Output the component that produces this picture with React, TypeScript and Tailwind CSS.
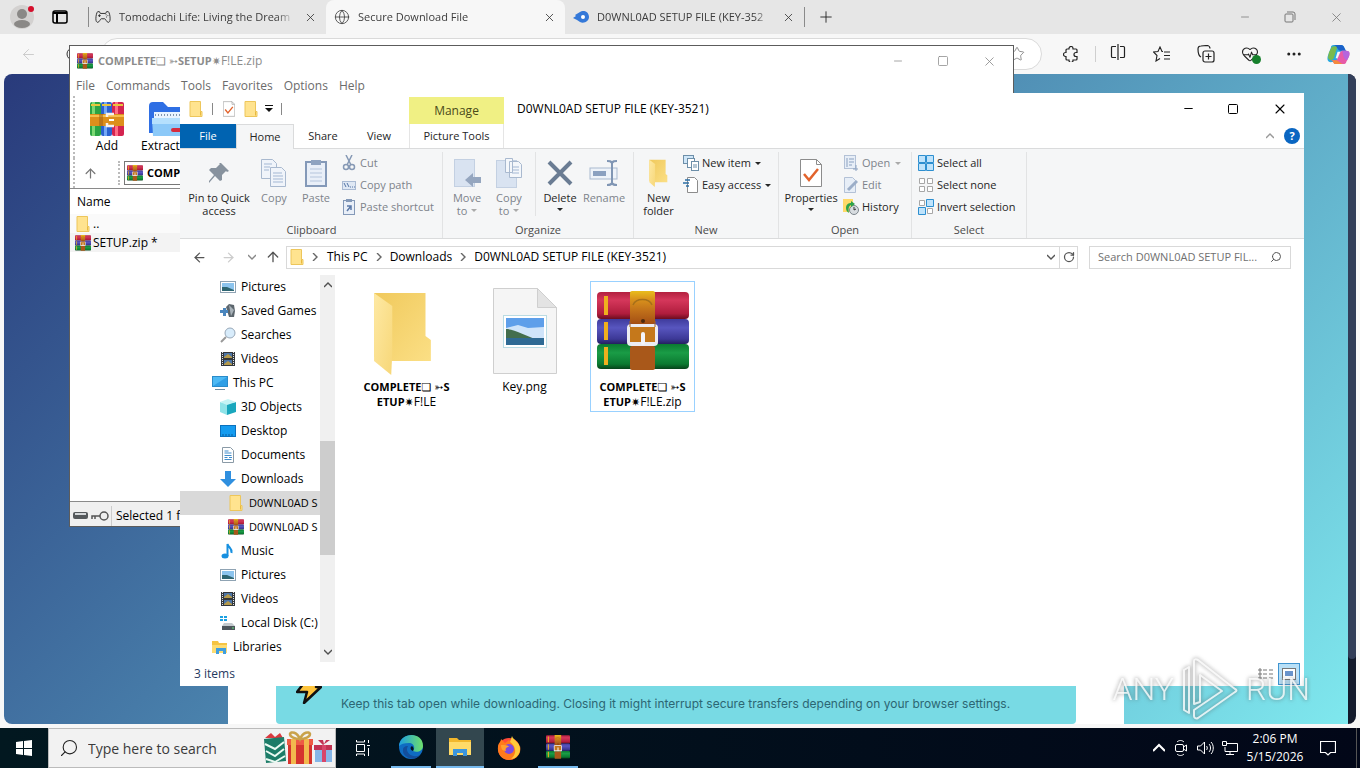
import type { ReactNode } from "react";
import {
  ArrowLeft,
  ArrowRight,
  ArrowUp,
  Ellipsis,
  Globe,
  HeartPulse,
  Minus,
  Plus,
  RotateCw,
  Search,
  Square,
  Star,
  X,
} from "lucide-react";

type IconProps = { className?: string };

type NavItem = {
  label: string;
  icon: (props: IconProps) => ReactNode;
  level: 1 | 2 | 3;
  active?: boolean;
};

/* ---------- icons ---------- */

function BooksIcon({ className }: IconProps) {
  return (
    <svg viewBox="0 0 92 80" preserveAspectRatio="none" className={className}>
      <defs>
        <linearGradient id="bookRed" x2="0" y2="1">
          <stop offset="0" stopColor="#b3203f" />
          <stop offset=".3" stopColor="#d5375b" />
          <stop offset=".8" stopColor="#b01d3d" />
          <stop offset="1" stopColor="#6b0d1f" />
        </linearGradient>
        <linearGradient id="bookBlue" x2="0" y2="1">
          <stop offset="0" stopColor="#3f3b9c" />
          <stop offset=".35" stopColor="#5856bf" />
          <stop offset=".8" stopColor="#3c3896" />
          <stop offset="1" stopColor="#24205f" />
        </linearGradient>
        <linearGradient id="bookGreen" x2="0" y2="1">
          <stop offset="0" stopColor="#0b7a31" />
          <stop offset=".35" stopColor="#1a9c46" />
          <stop offset=".8" stopColor="#0b7a31" />
          <stop offset="1" stopColor="#06431a" />
        </linearGradient>
        <linearGradient id="belt" x2="0" y2="1">
          <stop offset="0" stopColor="#e9bd1c" />
          <stop offset=".25" stopColor="#d9921c" />
          <stop offset=".6" stopColor="#c0701a" />
          <stop offset="1" stopColor="#a34e14" />
        </linearGradient>
      </defs>
      <rect y="1" width="92" height="27" rx="4" fill="url(#bookRed)" />
      <rect y="28" width="92" height="25" rx="4" fill="url(#bookBlue)" />
      <rect y="53" width="92" height="25" rx="4" fill="url(#bookGreen)" />
      <path d="M9 5v19M9 31v18M9 56v18" stroke="#efb01e" strokeWidth="4" />
      <rect x="30" y="33" width="31" height="22" rx="4" fill="#ececf2" />
      <rect x="33" y="0" width="25" height="33" rx="2" fill="url(#belt)" />
      <rect x="33" y="36" width="25" height="15" fill="#c5781b" />
      <rect x="33" y="55" width="25" height="24" rx="2" fill="#a9581a" />
      <path d="M36 14a10 8 0 0 1 19 0" fill="none" stroke="#a6701a" strokeWidth="1.5" />
      <path d="M33 30v6M58 30v6" stroke="#a8651c" />
      <path d="M46 43v9" stroke="#f4f4f8" strokeWidth="4" strokeLinecap="round" />
      <circle cx="46" cy="30" r="2" fill="#4e2a0c" />
    </svg>
  );
}

function AddIcon({ className }: IconProps) {
  return (
    <svg viewBox="0 0 34 34" className={className}>
      <rect x="0" width="11" height="34" rx="2" fill="#2ba344" />
      <rect x="2" width="3" height="34" fill="#7bd873" />
      <rect x="11" width="11" height="34" rx="2" fill="#2b62d0" />
      <rect x="14" width="3" height="34" fill="#74a8f5" />
      <rect x="22" width="12" height="34" rx="2" fill="#d42450" />
      <rect x="25" width="3" height="34" fill="#ff6d86" />
      <path d="M1 3h9M12 3h9M23 3h10" stroke="#e8c53c" strokeWidth="2" />
      <rect y="12" width="34" height="12" fill="#dd8f1c" />
      <path d="M0 14h34" stroke="#f5bf4e" strokeWidth="2" />
      <path d="M10 12v12M12 12v12" stroke="#9c5c12" />
      <path d="M24 12h-7v3M17 21v3h7" fill="none" stroke="#f5f0ee" strokeWidth="2.500" />
      <path d="M19 18h5" stroke="#fff" strokeWidth="2" />
    </svg>
  );
}

function ExtractIcon({ className }: IconProps) {
  return (
    <svg viewBox="0 0 36 34" className={className}>
      <path d="M0 4a4 4 0 0 1 4-4h10l5 5h17v26H0z" fill="#2f6fe4" />
      <path d="M5 10h31v6H5z" fill="#e9f4ff" />
      <path d="M6 13h30" stroke="#8295ac" strokeWidth="2" strokeDasharray="1 2" />
      <path d="M3 16h33v18H4z" fill="#8cc9f8" />
      <path d="M3 16h33v6H3z" fill="#b5e0fd" />
      <rect x="22" y="26" width="14" height="4" rx="2" fill="#d52c3e" />
    </svg>
  );
}

function FolderSmallIcon({ className }: IconProps) {
  return (
    <svg viewBox="0 0 16 16" className={className}>
      <path d="M2 .5h10.500v10h1.500v5H2z" fill="#ffe38f" stroke="#edc65b" />
      <path d="M12.500 10.500v4" stroke="#e8b93f" />
    </svg>
  );
}

function OpenFolderIcon({ className }: IconProps) {
  return (
    <svg viewBox="0 0 56 84" preserveAspectRatio="none" className={className}>
      <defs>
        <linearGradient id="folderBack" x2="1" y2="1">
          <stop offset="0" stopColor="#f0c95c" />
          <stop offset="1" stopColor="#fbdf85" />
        </linearGradient>
        <linearGradient id="folderFront" x2="1" y2="1">
          <stop offset="0" stopColor="#fee9a4" />
          <stop offset="1" stopColor="#f7d778" />
        </linearGradient>
      </defs>
      <path d="M1 2h48v43l5 4v21H18L1 66z" fill="url(#folderBack)" />
      <path d="M1 2l17 13v47l-1 22L1 70z" fill="url(#folderFront)" />
    </svg>
  );
}

function PropertiesIcon({ className }: IconProps) {
  return (
    <svg viewBox="0 0 22 28" fill="none" className={className}>
      <path d="M.5.500h16l5 5v22H.500z" fill="#fff" stroke="#8c8c8c" />
      <path d="M16.500.500v5h5" stroke="#8c8c8c" />
      <path d="M4 15l5 6 9-11" stroke="#e2632c" strokeWidth="2.500" />
    </svg>
  );
}

function PictureIcon({ className }: IconProps) {
  return (
    <svg viewBox="0 0 16 16" className={className}>
      <rect x=".5" y="2.500" width="15" height="11" fill="#fff" stroke="#8fa3b3" />
      <rect x="2" y="4" width="12" height="8" fill="#8cc4ee" />
      <path d="M2 8l5 0 7 3v1H2z" fill="#2e6672" />
    </svg>
  );
}

function GamesIcon({ className }: IconProps) {
  return (
    <svg viewBox="0 0 16 16" className={className}>
      <path d="M6 4l3-3 5 1 1 6-1 6H9z" fill="#5c666d" />
      <path d="M9 2l5 5-3 6z" fill="#a8b2b9" />
      <path d="M0 7h3V5h3v2h2v3H6v3H3v-3H0z" fill="#4a86be" />
    </svg>
  );
}

function LensIcon({ className }: IconProps) {
  return (
    <svg viewBox="0 0 16 16" className={className}>
      <path d="M1 15l5-5" stroke="#999" strokeWidth="2" />
      <circle cx="10" cy="6" r="5" fill="#d8ecfb" stroke="#98a8b8" />
    </svg>
  );
}

function VideoIcon({ className }: IconProps) {
  return (
    <svg viewBox="0 0 16 16" className={className}>
      <rect x="1" y="1" width="14" height="14" fill="#33373c" />
      <path d="M2.500 1v14M13.500 1v14" stroke="#dfe3e6" strokeDasharray="1 1" />
      <rect x="4" y="2" width="8" height="5" fill="#4c75a8" />
      <rect x="4" y="9" width="8" height="5" fill="#4c75a8" />
      <path d="M4 6l4-3 4 3v1H4zM4 13l4-3 4 3v1H4z" fill="#b59a4a" />
    </svg>
  );
}

function PcIcon({ className }: IconProps) {
  return (
    <svg viewBox="0 0 16 16" className={className}>
      <rect x=".5" y="1.500" width="15" height="10" fill="#4db9f4" stroke="#2a8bc9" />
      <path d="M1 11L15 2v9z" fill="#2f9fe6" />
      <path d="M3 14.500h10" stroke="#6f8ea3" />
    </svg>
  );
}

function CubeIcon({ className }: IconProps) {
  return (
    <svg viewBox="0 0 16 16" className={className}>
      <path d="M0 3l7 2v11l-7-3z" fill="#8fe3e8" />
      <path d="M7 5l9-2v10l-9 3z" fill="#19a7bd" />
      <path d="M0 3l8-3 8 3-9 3z" fill="#c5f4f5" />
    </svg>
  );
}

function DesktopIcon({ className }: IconProps) {
  return (
    <svg viewBox="0 0 16 16" className={className}>
      <rect x=".5" y="2.500" width="15" height="11" fill="#159cf0" stroke="#0b71bd" />
      <path d="M2 12h12" stroke="#0b5f9f" strokeDasharray="2 1" />
    </svg>
  );
}

function DocumentIcon({ className }: IconProps) {
  return (
    <svg viewBox="0 0 16 16" className={className}>
      <path d="M2.500.500h8l3 3v12h-11z" fill="#fff" stroke="#8a9aa6" />
      <path d="M4.500 4h4M4.500 6h7M4.500 8.500h7M4.500 10.500h3M9 10.500h3M4.500 12.500h7" stroke="#3f8ccc" />
    </svg>
  );
}

function DownloadIcon({ className }: IconProps) {
  return (
    <svg viewBox="0 0 16 16" className={className}>
      <path d="M5 0h6v8h5l-8 8-8-8h5z" fill="#2f8fdf" />
    </svg>
  );
}

function MusicIcon({ className }: IconProps) {
  return (
    <svg viewBox="0 0 16 16" className={className}>
      <path d="M7.500 13V1c1 4 5 4 4 9" fill="none" stroke="#1790e0" strokeWidth="2" />
      <ellipse cx="5" cy="13" rx="3.500" ry="2.500" fill="#1790e0" />
    </svg>
  );
}

function DiskIcon({ className }: IconProps) {
  return (
    <svg viewBox="0 0 16 16" className={className}>
      <path d="M0 1h3v2H0zM4 1h3v2H4zM0 4h3v2H0zM4 4h3v2H4z" fill="#1ba1e2" />
      <path d="M4 8h8l3 3H2z" fill="#c3c9cd" />
      <rect x="2" y="11" width="13" height="4" fill="#4d555b" />
      <path d="M12 13h2" stroke="#63e07a" />
    </svg>
  );
}

function LibraryIcon({ className }: IconProps) {
  return (
    <svg viewBox="0 0 16 16" className={className}>
      <path d="M0 2h6l1 2h8v10H0z" fill="#f5c443" />
      <path d="M0 6h15v8H0z" fill="#fddc72" />
      <path d="M4 15V9h10v6h-3v-3H7v3z" fill="#3f9ee0" />
    </svg>
  );
}

function CaretDown({ className = "" }: IconProps) {
  return (
    <svg viewBox="0 0 6 3" className={`h-[3px] w-[6px] ${className}`}>
      <path d="M0 0h6L3 3z" fill="currentColor" />
    </svg>
  );
}

function Chevron({ className = "size-2" }: IconProps) {
  return (
    <svg viewBox="0 0 8 8" fill="none" className={className}>
      <path d="M0 2l4 4 4-4" stroke="currentColor" strokeWidth="1.400" />
    </svg>
  );
}

function ControllerIcon({ className }: IconProps) {
  return (
    <svg viewBox="0 0 18 14" fill="none" stroke="currentColor" strokeWidth="1.100" className={className}>
      <path d="M6 3h6l1-2h2c1 1 2 4 2 8 0 3-1 4-2 4-2 0-3-4-4-4H7c-1 0-2 4-4 4-1 0-2-1-2-4 0-4 1-7 2-8h2z" />
      <path d="M5 4v3M3.500 5.500h3M12.500 4v1M14.500 5v1M12.500 7h1" />
    </svg>
  );
}

function PuzzleIcon({ className }: IconProps) {
  return (
    <svg viewBox="0 0 16 16" fill="none" stroke="currentColor" strokeWidth="1.200" className={className}>
      <path d="M6 2.500a2 2 0 0 1 4 0V3h3a1 1 0 0 1 1 1v2.500h-1a2 2 0 0 0 0 4h1V13a1 1 0 0 1-1 1h-3v.500a2 2 0 0 1-4 0V14H4a1 1 0 0 1-1-1v-2.500h-.500a2 2 0 0 1 0-4H3V4a1 1 0 0 1 1-1h2z" />
    </svg>
  );
}

function GiftsIcon({ className }: IconProps) {
  return (
    <svg viewBox="0 0 70 34" className={className}>
      <path d="M2 7l6-5 4 4 5-4 3 5z" fill="#d93a3f" />
      <path d="M1 8l20-2 2 24-20 2z" fill="#1c7c68" />
      <path d="M2 13l10 5 9-7M3 20l9 5 9-7M3 28l9 3 10-6" fill="none" stroke="#eafaf2" strokeWidth="2" />
      <path d="M25 10h24v23H25z" fill="#d5342f" />
      <path d="M24 8h26v6H24z" fill="#ee5a45" />
      <path d="M28 8h5v25h-5zM41 8h5v25h-5z" fill="#f2b94e" />
      <path d="M37 8c-3-7-9-8-10-5 0 3 5 5 10 5 5 0 10-2 10-5-1-3-7-2-10 5z" fill="none" stroke="#c9a24b" strokeWidth="2.500" />
      <path d="M52 17h17v14H52z" fill="#86b6e8" />
      <path d="M51 14h18v5H51z" fill="#c23353" />
      <path d="M59 14h4v17h-4z" fill="#d8466a" />
      <path d="M60 14l-5-5h5l1 4 2-4h4z" fill="#c23353" />
    </svg>
  );
}

function EdgeIcon({ className }: IconProps) {
  return (
    <svg viewBox="0 0 24 24" className={className}>
      <defs>
        <linearGradient id="edgeTop" x2="1">
          <stop offset="0" stopColor="#1c9de0" />
          <stop offset="1" stopColor="#6fe06a" />
        </linearGradient>
      </defs>
      <circle cx="12" cy="12" r="12" fill="#0f6cc2" />
      <path d="M0 11C1-3 24-4 24 11c0 5-6 7-10 5 3-4 0-8-4-8-5 0-8 1-10 3z" fill="url(#edgeTop)" />
      <path d="M9 11c-4 6 4 13 12 9-5 7-18 3-17-5 0-3 2-4 5-4z" fill="#134e9c" />
      <path d="M14 16c-3-1-3-4-1-5 2 2 2 3 1 5z" fill="#04141f" />
    </svg>
  );
}

function FirefoxIcon({ className }: IconProps) {
  return (
    <svg viewBox="0 0 24 24" className={className}>
      <circle cx="12" cy="13" r="11" fill="#ff4b3a" />
      <path d="M1 11c0-4 3-5 3-8l4 4 4-3c1 2 8 3 8 9l3-3c2 9-5 14-11 14C5 24 0 18 1 11z" fill="#ff7a1c" />
      <path d="M15 0c1 4 8 6 8 13 0 6-5 10-9 10 8-7 3-14-1-17z" fill="#ffca3a" />
      <circle cx="12" cy="13" r="5" fill="#7b4be0" />
      <path d="M4 9c4 0 7 0 8 2-3 0-4 2-3 4-4 0-5-3-5-6z" fill="#ffa02e" />
    </svg>
  );
}

function ExplorerIcon({ className }: IconProps) {
  return (
    <svg viewBox="0 0 22 20" className={className}>
      <path d="M0 1h8l2 2h12v14H0z" fill="#f2b72c" />
      <path d="M0 5h22v13H0z" fill="#ffda68" />
      <path d="M4 19v-7h14v7h-4v-3H8v3z" fill="#3d96dc" />
    </svg>
  );
}

function CopilotIcon({ className }: IconProps) {
  return (
    <svg viewBox="0 0 24 22" className={className}>
      <path d="M7 1h8c3 0 3 4 5 6h-5l-4 8c-1 4-4 4-7 4-4 0-4-4-3-7l3-8c0-2 1-3 3-3z" fill="#27a9e0" />
      <path d="M2 9l3-6 6-1-4 13c-2 3-6 2-6-1z" fill="#79ba4c" />
      <path d="M7 1h8c3 0 3 4 5 6h-6c-3 0-3-5-7-6z" fill="#1b61c9" />
      <path d="M17 21H9c-3 0-2-4-5-4h5c3 0 3-10 7-10h4c4 0 4 3 3 6l-3 6c0 1-1 2-3 2z" fill="#e75aa8" />
      <path d="M17 21H9c-3 0-2-4-5-4h5c3 0 4 3 8 4z" fill="#f58a3c" />
      <path d="M16 7h4c4 0 4 3 3 6l-2 4c-4-1-4-6-5-10z" fill="#b565dd" />
      <path d="M11 8h3l-3 7H9z" fill="#f7f7f7" />
    </svg>
  );
}

/* ---------- browser ---------- */

function BrowserTab({ title, icon, active }: { title: string; icon: ReactNode; active?: boolean }) {
  return (
    <div
      className={`flex h-full w-[239px] items-center gap-2 pr-2 pl-2 ${
        active ? "rounded-t-lg bg-[#f7f7f7]" : ""
      }`}
    >
      {icon}
      <button className="min-w-0 flex-1 [mask-image:linear-gradient(to_right,black_90%,transparent)] text-left whitespace-nowrap text-[#3c3c3c]">
        {title}
      </button>
      <button aria-label="Close tab" className="flex size-4 items-center justify-center text-[#333]">
        <X size={13} strokeWidth={1.5} />
      </button>
    </div>
  );
}

function Browser() {
  return (
    <div className="flex min-h-0 flex-1 flex-col bg-[#f7f7f7]">
      <div className="flex h-[34px] items-center bg-[#e6e6e6] pl-2">
        <button aria-label="Profile" className="h-7 w-7">
          <svg viewBox="0 0 28 28" className="size-7">
            <circle cx="14" cy="14" r="12" fill="#d3d1d0" />
            <circle cx="14" cy="11" r="5" fill="#8a8886" />
            <ellipse cx="14" cy="21" rx="8" ry="4" fill="#8a8886" />
            <circle cx="23" cy="6" r="3" fill="#d50f2c" />
          </svg>
        </button>
        <button aria-label="Tab actions" className="ml-4 flex w-4 justify-center">
          <svg viewBox="0 0 16 14" fill="none" className="h-[14px] w-4">
            <rect x="1" y="1" width="14" height="12" rx="2" stroke="#000" strokeWidth="1.500" />
            <path d="M1 3h14M5 3v10" stroke="#000" strokeWidth="2" />
          </svg>
        </button>
        <div className="ml-5 h-5 w-px bg-[#8a8a8a]" />
        <div className="ml-[-2px] flex h-full items-center text-[11px]">
          <BrowserTab
            title="Tomodachi Life: Living the Dream"
            icon={<ControllerIcon className="h-[14px] w-4 shrink-0 text-[#333]" />}
          />
          <BrowserTab
            active
            title="Secure Download File"
            icon={<Globe size={16} strokeWidth={1.3} className="shrink-0 text-[#444]" />}
          />
          <BrowserTab
            title="D0WNL0AD SETUP FILE (KEY-352"
            icon={
              <svg viewBox="0 0 16 12" className="h-3 w-4 shrink-0">
                <path d="M0 7l3-2-1-1 5-3c5-3 9 1 9 5s-5 7-9 5L4 9z" fill="#3478d8" />
                <circle cx="10" cy="6" r="2" fill="#fff" />
              </svg>
            }
          />
        </div>
        <div className="h-5 w-px bg-[#8a8a8a]" />
        <button aria-label="New tab" className="ml-3 text-[#222]">
          <Plus size={18} strokeWidth={1.2} />
        </button>
        <div className="ml-auto flex w-[138px] justify-around text-[#777]">
          <button aria-label="Minimize browser"><Minus size={12} strokeWidth={1.5} /></button>
          <button aria-label="Restore browser">
            <svg viewBox="0 0 12 12" fill="none" stroke="currentColor" className="size-3">
              <rect x="1" y="3" width="8" height="8" rx="1" />
              <path d="M3 1h6a2 2 0 0 1 2 2v6" />
            </svg>
          </button>
          <button aria-label="Close browser"><X size={15} strokeWidth={1.3} /></button>
        </div>
      </div>

      <div className="flex h-10 shrink-0 items-center pl-5">
        <button aria-label="Back" className="text-[#c8c8c8]"><ArrowLeft size={17} strokeWidth={1.3} /></button>
        <button aria-label="Refresh" className="ml-7 text-[#333]"><RotateCw size={16} strokeWidth={1.5} /></button>
        <div className="ml-5 flex h-8 flex-1 items-center justify-end rounded-full border border-[#dadada] bg-white pr-4">
          <Star size={16} strokeWidth={1.2} className="text-[#777]" />
        </div>
        <button aria-label="Extensions" className="ml-[21px] text-[#222]"><PuzzleIcon className="size-4" /></button>
        <div className="ml-[16px] h-4 w-px bg-[#cfcfcf]" />
        <div className="flex w-[264px] text-[#222]">
          <button aria-label="Split screen" className="flex flex-1 justify-center">
            <svg viewBox="0 0 16 16" fill="none" stroke="currentColor" strokeWidth="1.200" className="size-4">
              <path d="M6 2.500H2.500a1 1 0 0 0-1 1v9a1 1 0 0 0 1 1H6M10 2.500h3.500a1 1 0 0 1 1 1v9a1 1 0 0 1-1 1H10M8 0v16" />
            </svg>
          </button>
          <button aria-label="Favorites" className="flex flex-1 items-center justify-center">
            <svg viewBox="0 0 18 16" fill="none" stroke="currentColor" strokeWidth="1.100" className="h-4 w-[18px]">
              <path d="M10 5.500H9L7 1 5 5.500l-4.500.500 3.500 3.500-1 5.500L7 12.500M11 6h6M11 9.500h6M11 13h6" />
            </svg>
          </button>
          <button aria-label="Collections" className="flex flex-1 items-center justify-center">
            <svg viewBox="0 0 18 18" fill="none" stroke="currentColor" strokeWidth="1.200" className="size-[18px]">
              <rect x="6" y="6" width="11" height="11" rx="2" />
              <path d="M4 12C2 11 1 7 1 4c0-2 1-3 3-3l6-.500c2 0 3 2 3 3M11.500 8.500v6M8.500 11.500h6" />
            </svg>
          </button>
          <button aria-label="Browser essentials" className="flex flex-1 items-center justify-center">
            <span className="relative">
              <HeartPulse size={18} strokeWidth={1.4} />
              <span className="absolute right-[-2px] bottom-[-1px] size-[9px] rounded-full bg-[#16802c]" />
            </span>
          </button>
          <button aria-label="Settings and more" className="flex flex-1 items-center justify-center">
            <Ellipsis size={18} strokeWidth={2} />
          </button>
          <button aria-label="Copilot" className="flex flex-1 items-center justify-center">
            <CopilotIcon className="h-[21px] w-[23px]" />
          </button>
        </div>
      </div>

      <div className="mx-1 mb-1 flex min-h-0 flex-1 overflow-hidden rounded-lg">
        <div className="flex flex-1 justify-center bg-linear-135 from-[#293a7b] to-[#7fe8ee] pt-12">
          <div className="flex w-full max-w-4xl flex-col justify-end bg-white px-12">
            <div className="flex h-16 items-end rounded-b bg-[#78dae4] pb-3 pl-[20px] font-['Inter',sans-serif] text-xs text-[#2c6673]">
              <svg viewBox="0 0 26 26" className="mb-2 h-[26px] w-[26px]">
                <path d="M11 1h13l-4 8h5L8 25l3-11H1z" fill="#ffc53d" stroke="#111" strokeWidth="2.500" strokeLinejoin="round" />
              </svg>
              <p className="ml-[19px]">
                Keep this tab open while downloading. Closing it might interrupt secure transfers depending on your browser settings.
              </p>
            </div>
          </div>
        </div>
        <div className="flex w-2 flex-col bg-[#12192b]">
          <div className="h-[90%] rounded-b bg-[#323e59]" />
        </div>
      </div>
    </div>
  );
}

/* ---------- archive window ---------- */

function ArchiveWindow() {
  return (
    <section className="absolute top-[45px] right-[346px] left-[69px] flex h-[482px] flex-col border border-[#5c5c5c] bg-white text-xs">
      <div className="flex h-[30px] items-center pl-[7px]">
        <BooksIcon className="size-4" />
        <h2 className="ml-[5px] text-[#8c8c8c]">
          <b className="text-[11px]">COMPLETE❏ ➳SETUP✷</b>F!LE.zip
        </h2>
        <div className="ml-auto flex w-[138px] justify-around text-[#888]">
          <button aria-label="Minimize archive"><Minus size={12} strokeWidth={1.5} /></button>
          <button aria-label="Maximize archive"><Square size={12} strokeWidth={1.5} /></button>
          <button aria-label="Close archive"><X size={15} strokeWidth={1.3} /></button>
        </div>
      </div>
      <nav className="flex h-5 items-center gap-[11px] pl-[6px] text-[#6b6b6b]">
        <button>File</button>
        <button>Commands</button>
        <button>Tools</button>
        <button>Favorites</button>
        <button>Options</button>
        <button>Help</button>
      </nav>
      <div className="ml-[3px] flex h-[62px] gap-4 border-l-2 border-dotted border-[#bbb] pt-[6px] pl-[14px]">
        <button className="flex w-9 flex-col items-center">
          <AddIcon className="size-[34px]" />
          <span className="mt-[2px] leading-4">Add</span>
        </button>
        <button className="flex flex-col items-start whitespace-nowrap">
          <ExtractIcon className="ml-2 h-[34px] w-9" />
          <span className="mt-[2px] leading-4">Extract To</span>
        </button>
      </div>
      <div className="ml-[3px] flex h-[30px] items-center border-l-2 border-dotted border-[#bbb]">
        <button aria-label="Up one level" className="ml-2 text-[#777]"><ArrowUp size={15} /></button>
        <div className="ml-5 h-6 border-l-2 border-dotted border-[#bbb]" />
        <div className="ml-1 flex h-6 flex-1 items-center border border-[#777] pl-[2px]">
          <BooksIcon className="size-4" />
          <b className="ml-1 text-[11px]">COMPLETE❏ ➳SETUP✷</b>
        </div>
      </div>
      <div className="flex-1 border-y border-[#8a8a8a]">
        <div className="flex h-[25px] items-center pl-[7px]">Name</div>
        <div className="flex h-[19px] items-center gap-[2px] bg-[#fafafa] pl-[5px]">
          <FolderSmallIcon className="size-4" />..
        </div>
        <div className="flex h-[19px] items-center gap-[2px] bg-[#f3f3f3] pl-[5px]">
          <BooksIcon className="size-4" />SETUP.zip *
        </div>
      </div>
      <div className="flex h-6 items-center bg-[#f0f0f0] pt-[3px] pl-[3px]">
        <svg viewBox="0 0 36 12" className="h-3 w-9">
          <rect x="0" y="2" width="15" height="7" rx="2" fill="#55595c" />
          <path d="M2 4h11" stroke="#d5d8da" strokeWidth="2" />
          <circle cx="31" cy="6" r="4" fill="#eee" stroke="#555" strokeWidth="1.500" />
          <path d="M27 6h-8v3M22 6v3" stroke="#555" strokeWidth="1.500" fill="none" />
        </svg>
        <div className="ml-[2px] h-5 w-px bg-[#ccc]" />
        <span className="ml-1">Selected 1 file</span>
      </div>
    </section>
  );
}

/* ---------- explorer window ---------- */

function BigButton({
  icon,
  lines,
  width,
  caret,
  dim,
}: {
  icon: ReactNode;
  lines: string[];
  width: string;
  caret?: "inline" | "below";
  dim?: boolean;
}) {
  return (
    <button className={`flex h-full shrink-0 flex-col items-center pt-[3px] ${width} ${dim ? "text-[#7d838b]" : "text-[#262626]"}`}>
      <span className="flex h-9 items-center justify-center">{icon}</span>
      {lines.map((line, i) => (
        <span key={line} className="flex items-center gap-1 leading-[13px] whitespace-nowrap">
          {line}
          {caret === "inline" && i === lines.length - 1 && <CaretDown className="text-[#aaa]" />}
        </span>
      ))}
      {caret === "below" && <CaretDown className="mt-1" />}
    </button>
  );
}

function SmallButton({ icon, label, caret, dim }: { icon: ReactNode; label: string; caret?: boolean; dim?: boolean }) {
  return (
    <button className={`flex h-[22px] items-center gap-[3px] whitespace-nowrap ${dim ? "text-[#7d838b]" : "text-[#262626]"}`}>
      <span className="flex size-4 items-center justify-center">{icon}</span>
      {label}
      {caret && <CaretDown className={dim ? "ml-[2px] text-[#aaa]" : "ml-px"} />}
    </button>
  );
}

function RibbonGroup({ label, width, children }: { label: string; width: string; children: ReactNode }) {
  return (
    <div className={`flex shrink-0 flex-col border-r border-[#e2e3e4] ${width}`}>
      <div className="flex h-[70px] items-start">{children}</div>
      <div className="text-center leading-4 text-[#4a4a4a]">{label}</div>
    </div>
  );
}

function CopyPages({ className }: IconProps) {
  return (
    <svg viewBox="0 0 26 28" className={className}>
      <path d="M.5.500h11l4 4v15H.500z" fill="#f0f4fa" stroke="#a9b9cf" />
      <path d="M9.500 8.500h11l4 4v15h-15z" fill="#f0f4fa" stroke="#a9b9cf" />
      <path d="M3 5h8M3 8h6M3 11h5M12 14h9M12 17h10M12 20h10M12 23h10" stroke="#a3b7d3" />
    </svg>
  );
}

function Ribbon() {
  return (
    <div className="flex h-[91px] border-t border-b border-[#dadbdc] bg-[#f5f6f7] pt-[3px] pl-px text-[11px]">
      <RibbonGroup label="Clipboard" width="w-[262px]">
        <BigButton
          width="w-[76px]"
          lines={["Pin to Quick", "access"]}
          icon={
            <svg viewBox="0 0 24 24" className="size-6">
              <path d="M14 2l8 8-2 1-1-1-4 4v5l-2 1-5-5-6 7 0-2 5-6-5-5 2-2h5l4-4-1-1z" fill="#87929e" />
            </svg>
          }
        />
        <BigButton dim width="w-[34px]" lines={["Copy"]} icon={<CopyPages className="h-7 w-[26px]" />} />
        <BigButton
          dim
          width="w-[50px]"
          lines={["Paste"]}
          icon={
            <svg viewBox="0 0 22 28" className="h-7 w-[22px]">
              <rect x="1" y="3" width="20" height="24" fill="#e9eff8" stroke="#8499b8" strokeWidth="2" />
              <path d="M6 1h10v5H6z" fill="#8fa3c0" />
              <path d="M5 10h12M5 14h12M5 18h12M5 22h12" stroke="#b5c5dc" />
            </svg>
          }
        />
        <div className="flex flex-col">
          <SmallButton
            dim
            label="Cut"
            icon={
              <svg viewBox="0 0 14 16" fill="none" stroke="#8699b5" strokeWidth="1.500" className="h-4 w-[14px]">
                <path d="M4 0l5 10M10 0L5 10" />
                <circle cx="4" cy="12" r="2.500" />
                <circle cx="10" cy="12" r="2.500" />
              </svg>
            }
          />
          <SmallButton
            dim
            label="Copy path"
            icon={
              <svg viewBox="0 0 14 9" className="h-[9px] w-[14px]">
                <rect x=".5" y=".5" width="13" height="8" fill="#dfe8f4" stroke="#a9bad3" />
                <path d="M2 2l2 4M5 2l2 4M8 6h1M10 6h1M12 6h1" stroke="#5575a5" />
              </svg>
            }
          />
          <SmallButton
            dim
            label="Paste shortcut"
            icon={
              <svg viewBox="0 0 12 16" className="h-4 w-3">
                <rect x=".5" y="1.500" width="11" height="14" fill="#e9eff8" stroke="#8499b8" />
                <path d="M3 0h6v3H3z" fill="#8499b8" />
                <path d="M4 12l4-5M4 7h4v4" stroke="#5b79a8" strokeWidth="1.500" fill="none" />
              </svg>
            }
          />
        </div>
      </RibbonGroup>

      <RibbonGroup label="Organize" width="w-[191px]">
        <BigButton
          dim
          width="w-12"
          caret="inline"
          lines={["Move", "to"]}
          icon={
            <svg viewBox="0 0 28 28" className="size-7">
              <rect x="1.500" y=".5" width="20" height="27" fill="#d9e3f1" stroke="#c3d0e2" />
              <path d="M12 21l8-7v4h8v6h-8v4z" fill="#95a6bf" />
            </svg>
          }
        />
        <BigButton
          dim
          width="w-9"
          caret="inline"
          lines={["Copy", "to"]}
          icon={
            <svg viewBox="0 0 26 30" className="h-[30px] w-[26px]">
              <rect x=".5" y="2.500" width="20" height="27" fill="#d9e3f1" stroke="#c3d0e2" />
              <path d="M9.500.500h7v14h-7zM13.500 3.500h9l3 3v13h-12z" fill="#f4f7fb" stroke="#a9b9cf" />
              <path d="M16 9h7M16 12h7M16 15h7" stroke="#a3b7d3" />
            </svg>
          }
        />
        <div className="mx-2 h-16 w-px bg-[#e2e3e4]" />
        <BigButton
          width="w-8"
          caret="below"
          lines={["Delete"]}
          icon={
            <svg viewBox="0 0 26 26" className="h-[26px] w-[26px]">
              <path d="M2 2l22 22M24 2L2 24" stroke="#6a7c93" strokeWidth="4" />
            </svg>
          }
        />
        <BigButton
          dim
          width="w-14"
          lines={["Rename"]}
          icon={
            <svg viewBox="0 0 30 28" fill="none" className="h-7 w-[30px]">
              <rect x="1" y="9" width="27" height="11" fill="#eef3f9" stroke="#a9b9cf" />
              <rect x="4" y="12" width="13" height="5" fill="#8ba1c0" />
              <path d="M18 2c3 0 4 0 5 2 1-2 2-2 5-2M23 4v20M18 26c3 0 4 0 5-2 1 2 2 2 5 2" stroke="#8096b4" strokeWidth="2" />
            </svg>
          }
        />
      </RibbonGroup>

      <RibbonGroup label="New" width="w-[145px]">
        <BigButton width="w-[49px]" lines={["New", "folder"]} icon={<OpenFolderIcon className="h-7 w-[19px]" />} />
        <div className="flex flex-col">
          <SmallButton
            caret
            label="New item"
            icon={
              <svg viewBox="0 0 16 16" fill="#fff" stroke="#6d8fa9" className="size-4">
                <rect x=".5" y=".5" width="10" height="8" fill="#cfe6f8" />
                <rect x="4.500" y="3.500" width="7" height="9" />
                <rect x="8.500" y="6.500" width="7" height="9" />
                <path d="M10 10h4M10 12h4" />
              </svg>
            }
          />
          <SmallButton
            caret
            label="Easy access"
            icon={
              <svg viewBox="0 0 16 16" fill="none" className="size-4">
                <path d="M4.500.500h7l3 3v12h-10z" fill="#fff" stroke="#8c8c8c" />
                <path d="M2 3h5M0 6h6M3 9h3" stroke="#2d6fa5" strokeWidth="1.500" />
              </svg>
            }
          />
        </div>
      </RibbonGroup>

      <RibbonGroup label="Open" width="w-[133px]">
        <BigButton width="w-[64px]" caret="below" lines={["Properties"]} icon={<PropertiesIcon className="h-7 w-[22px]" />} />
        <div className="flex flex-col">
          <SmallButton
            dim
            caret
            label="Open"
            icon={
              <svg viewBox="0 0 14 16" className="h-4 w-[14px]">
                <rect x=".5" y=".5" width="11" height="13" fill="#e7eef7" stroke="#b3c1d6" />
                <path d="M3 3v9M5 4h5M5 7h5M5 10h3M9 14h5M12 10v6" stroke="#8ba1c0" />
              </svg>
            }
          />
          <SmallButton
            dim
            label="Edit"
            icon={
              <svg viewBox="0 0 14 16" className="h-4 w-[14px]">
                <path d="M.5.500h8l3 3v12H.500z" fill="#e7eef7" stroke="#b3c1d6" />
                <path d="M4 13l9-9" stroke="#9caec8" strokeWidth="3" />
              </svg>
            }
          />
          <SmallButton
            label="History"
            icon={
              <svg viewBox="0 0 16 16" className="size-4">
                <path d="M0 0h10v13H0z" fill="#ffd968" />
                <circle cx="11" cy="11" r="4.500" fill="#d7dce0" stroke="#7d868d" />
                <path d="M11 8v3l2-1" stroke="#333" fill="none" />
                <path d="M3 9c0-4 3-5 5-5v-2l4 3-4 3V6C6 7 5 9 6 14c-2-1-3-3-3-5z" fill="#2ea44a" />
              </svg>
            }
          />
        </div>
      </RibbonGroup>

      <RibbonGroup label="Select" width="w-[115px]">
        <div className="ml-[6px] flex flex-col">
          <SmallButton
            label="Select all"
            icon={
              <svg viewBox="0 0 16 16" className="size-4">
                <path d="M.5.500h7v7h-7zM8.500.500h7v7h-7zM.5 8.500h7v7h-7zM8.500 8.500h7v7h-7z" fill="#bfe3fb" stroke="#2d8fd0" />
              </svg>
            }
          />
          <SmallButton
            label="Select none"
            icon={
              <svg viewBox="0 0 16 16" className="size-4">
                <path d="M1.500 1.500h5v5h-5zM9.500 1.500h5v5h-5zM1.500 9.500h5v5h-5zM9.500 9.500h5v5h-5z" fill="#fff" stroke="#a7a7a7" />
              </svg>
            }
          />
          <SmallButton
            label="Invert selection"
            icon={
              <svg viewBox="0 0 16 16" className="size-4">
                <path d="M1.500 1.500h5v5h-5zM9.500 9.500h5v5h-5z" fill="#fff" stroke="#a7a7a7" />
                <path d="M8.500.500h7v7h-7zM.5 8.500h7v7h-7z" fill="#bfe3fb" stroke="#2d8fd0" />
              </svg>
            }
          />
        </div>
      </RibbonGroup>
    </div>
  );
}

const navItems: NavItem[] = [
  { label: "Pictures", icon: PictureIcon, level: 2 },
  { label: "Saved Games", icon: GamesIcon, level: 2 },
  { label: "Searches", icon: LensIcon, level: 2 },
  { label: "Videos", icon: VideoIcon, level: 2 },
  { label: "This PC", icon: PcIcon, level: 1 },
  { label: "3D Objects", icon: CubeIcon, level: 2 },
  { label: "Desktop", icon: DesktopIcon, level: 2 },
  { label: "Documents", icon: DocumentIcon, level: 2 },
  { label: "Downloads", icon: DownloadIcon, level: 2 },
  { label: "D0WNL0AD S", icon: FolderSmallIcon, level: 3, active: true },
  { label: "D0WNL0AD S", icon: BooksIcon, level: 3 },
  { label: "Music", icon: MusicIcon, level: 2 },
  { label: "Pictures", icon: PictureIcon, level: 2 },
  { label: "Videos", icon: VideoIcon, level: 2 },
  { label: "Local Disk (C:)", icon: DiskIcon, level: 2 },
  { label: "Libraries", icon: LibraryIcon, level: 1 },
];

const indent = { 1: "pl-8", 2: "pl-10", 3: "pl-12" };

function NavPane() {
  return (
    <div className="flex w-[155px] shrink-0">
      <ul className="min-w-0 flex-1">
        {navItems.map((item, i) => {
          const Icon = item.icon;
          return (
            <li key={i} className={item.active ? "bg-[#d9d9d9]" : ""}>
              <button
                className={`flex h-6 w-full items-center gap-[5px] whitespace-nowrap ${indent[item.level]} ${
                  item.level === 3 ? "text-[11px]" : ""
                }`}
              >
                <Icon className="size-4 shrink-0" />
                {item.label}
              </button>
            </li>
          );
        })}
      </ul>
      <div className="flex w-[15px] flex-col items-center bg-[#f0f0f0] py-[6px] text-[#505050]">
        <Chevron className="size-2 rotate-180" />
        <div className="mt-[152px] h-[114px] w-full bg-[#cdcdcd]" />
        <Chevron className="mt-auto size-2" />
      </div>
    </div>
  );
}

function FileTile({ icon, selected, children }: { icon: ReactNode; selected?: boolean; children: ReactNode }) {
  return (
    <button
      className={`flex h-[131px] w-[105px] flex-col items-center border ${
        selected ? "border-[#99d1ff]" : "border-transparent"
      }`}
    >
      <span className="flex h-[97px] items-center justify-center">{icon}</span>
      <span className="leading-[15px] whitespace-nowrap">{children}</span>
    </button>
  );
}

function ExplorerWindow() {
  return (
    <section className="absolute top-[93px] right-14 left-[180px] flex h-[593px] flex-col bg-white text-xs text-black">
      <div className="flex h-[31px]">
        <div className="flex w-[229px] items-center pl-2">
          <FolderSmallIcon className="size-4" />
          <div className="mx-2 h-3 w-px bg-[#888]" />
          <PropertiesIcon className="ml-[2px] h-4 w-3" />
          <FolderSmallIcon className="ml-2 size-4" />
          <svg viewBox="0 0 8 7" className="ml-[6px] h-[7px] w-2">
            <path d="M0 .500h8" stroke="#111" />
            <path d="M0 3h8L4 7z" fill="#111" />
          </svg>
          <div className="ml-2 h-3 w-px bg-[#888]" />
        </div>
        <div className="mt-1 flex w-[95px] items-center justify-center bg-[#f0f084] text-[#4a4a1a]">Manage</div>
        <h1 className="ml-[13px] flex items-center">D0WNL0AD SETUP FILE (KEY-3521)</h1>
        <div className="ml-auto flex w-[138px] items-center justify-around">
          <button aria-label="Minimize"><Minus size={13} strokeWidth={1.8} /></button>
          <button aria-label="Maximize"><Square size={12} strokeWidth={2} /></button>
          <button aria-label="Close"><X size={16} strokeWidth={1.6} /></button>
        </div>
      </div>
      <div className="flex h-6 items-stretch text-[11px] text-[#262626]">
        <button className="w-14 bg-[#0063b1] text-white">File</button>
        <button className="z-10 mb-[-1px] w-[58px] border-x border-t border-[#dadbdc] bg-[#f5f6f7]">Home</button>
        <button className="w-[58px]">Share</button>
        <button className="w-[54px]">View</button>
        <button className="ml-[3px] w-[95px] border-x border-[#e5e5e5]">Picture Tools</button>
        <button aria-label="Collapse ribbon" className="ml-auto text-[#999]"><Chevron className="size-2 rotate-180" /></button>
        <button aria-label="Help" className="mr-1 ml-[10px] flex size-4 items-center justify-center self-center rounded-full bg-[#0a66c2] font-bold text-white">
          ?
        </button>
      </div>
      <Ribbon />
      <div className="flex h-9 items-center pr-[13px] pl-3">
        <button aria-label="Back to previous folder" className="text-[#555]"><ArrowLeft size={15} /></button>
        <button aria-label="Forward" className="ml-[14px] text-[#ccc]"><ArrowRight size={15} /></button>
        <Chevron className="ml-3 size-2 text-[#888]" />
        <button aria-label="Up" className="ml-[9px] text-[#555]"><ArrowUp size={16} /></button>
        <div className="ml-[5px] flex h-[23px] flex-1 items-center border border-[#d9d9d9] pl-[2px]">
          <FolderSmallIcon className="size-4" />
          <Chevron className="mr-2 ml-[6px] size-2 -rotate-90 text-[#666]" />
          <button>This PC</button>
          <Chevron className="mx-[7px] size-2 -rotate-90 text-[#666]" />
          <button>Downloads</button>
          <Chevron className="mx-[7px] size-2 -rotate-90 text-[#666]" />
          <button>D0WNL0AD SETUP FILE (KEY-3521)</button>
          <Chevron className="mr-1 ml-auto size-2 text-[#555]" />
          <button aria-label="Refresh folder" className="flex h-full w-[18px] items-center justify-center border-l border-[#d9d9d9] text-[#555]">
            <RotateCw size={12} strokeWidth={2.5} />
          </button>
        </div>
        <label className="ml-[11px] flex h-[23px] w-[202px] items-center border border-[#d9d9d9] pr-2 pl-2">
          <input
            type="text"
            aria-label="Search folder"
            placeholder="Search D0WNL0AD SETUP FIL..."
            className="min-w-0 flex-1 text-[11px] outline-none placeholder:text-[#707070]"
          />
          <Search size={12} className="-scale-x-100 text-[#555]" />
        </label>
      </div>
      <div className="flex min-h-0 flex-1">
        <NavPane />
        <div className="flex flex-1 gap-[13px] pt-[6px] pl-[19px]">
          <FileTile icon={<OpenFolderIcon className="mt-1 mr-2 h-[84px] w-[60px]" />}>
            <b className="text-[11px]">COMPLETE❏ ➳S<br />ETUP✷</b>F!LE
          </FileTile>
          <FileTile
            icon={
              <svg viewBox="0 0 64 86" className="h-[86px] w-16">
                <path d="M.5.500h44l19 19v66H.500z" fill="#f5f5f5" stroke="#cfcfcf" />
                <path d="M44.500.500v19h19z" fill="#e3e3e3" stroke="#cfcfcf" />
                <rect x="10.500" y="27.500" width="43" height="32" fill="#fff" stroke="#b9dbe3" />
                <rect x="13" y="30" width="38" height="27" fill="#5e9fea" />
                <path d="M13 40l12-3 10 3 16-1v11H13z" fill="#cfe4fa" />
                <path d="M13 41c8 0 20 7 30 10H13z" fill="#436e4d" />
                <path d="M13 50h38v7H13z" fill="#2f6a94" />
              </svg>
            }
          >
            Key.png
          </FileTile>
          <FileTile selected icon={<BooksIcon className="h-20 w-[92px]" />}>
            <b className="text-[11px]">COMPLETE❏ ➳S<br />ETUP✷</b>F!LE.zip
          </FileTile>
        </div>
      </div>
      <div className="flex h-6 items-center justify-between pr-1 pl-[14px] text-[#1f3a5f]">
        3 items
        <div className="flex items-center gap-1">
          <button aria-label="Details view">
            <svg viewBox="0 0 16 12" className="h-3 w-4" fill="none" stroke="#777">
              <path d="M1 1h2v2H1zM1 5h2v2H1zM1 9h2v2H1zM5 2h4M11 2h4M5 6h4M11 6h4M5 10h4M11 10h4" />
            </svg>
          </button>
          <button aria-label="Large icons view" className="flex size-[22px] items-center justify-center border border-[#3f94d0] bg-[#b9e0f7]">
            <svg viewBox="0 0 14 12" className="h-3 w-[14px]">
              <rect x=".5" y=".5" width="13" height="11" fill="#fff" stroke="#777" />
              <rect x="3" y="3" width="8" height="5" fill="#6a94cc" />
            </svg>
          </button>
        </div>
      </div>
    </section>
  );
}

/* ---------- taskbar ---------- */

function TaskButton({ label, icon, open, active }: { label: string; icon: ReactNode; open?: boolean; active?: boolean }) {
  return (
    <button
      aria-label={label}
      className={`flex h-full w-12 flex-col items-center ${active ? "bg-[#33474f]" : ""}`}
    >
      <span className="flex flex-1 items-center">{icon}</span>
      {open && <span className={`h-[2px] bg-[#76b9ed] ${active ? "w-full" : "w-10"}`} />}
    </button>
  );
}

function Taskbar() {
  return (
    <footer className="flex h-10 shrink-0 items-center bg-linear-to-r from-[#021820] to-[#020718] text-white">
      <button aria-label="Start" className="flex w-12 justify-center">
        <svg viewBox="0 0 16 16" className="size-4" fill="#fff">
          <path d="M0 2l7-1v7H0zM8 1l8-1v8H8zM0 9h7v6l-7-1zM8 9h8v7l-8-1z" />
        </svg>
      </button>
      <label className="flex h-full w-[288px] items-center border border-[#bbb] bg-[#f2f2f2] pr-[2px] pl-[10px] text-[#222]">
        <Search size={20} strokeWidth={1.3} className="-scale-x-100" />
        <input
          type="text"
          aria-label="Type here to search"
          placeholder="Type here to search"
          className="ml-[9px] min-w-0 flex-1 text-[14px] outline-none placeholder:text-[#3b3b3b]"
        />
        <GiftsIcon className="h-[34px] w-[70px]" />
      </label>
      <div className="flex h-full gap-px pl-[2px]">
        <TaskButton
          label="Task view"
          icon={
            <svg viewBox="0 0 17 16" fill="none" stroke="#fff" className="h-4 w-[17px]">
              <path d="M2.500 4.500h8v7h-8zM2.500 0v2h8V0M2.500 16v-2h8v2M14.500 0v3M14.500 8v8M13 5.500h3" />
            </svg>
          }
        />
        <TaskButton open label="Edge" icon={<EdgeIcon className="size-6" />} />
        <TaskButton open active label="File Explorer" icon={<ExplorerIcon className="h-5 w-[22px]" />} />
        <TaskButton label="Firefox" icon={<FirefoxIcon className="size-6" />} />
        <TaskButton open label="WinRAR" icon={<BooksIcon className="size-6" />} />
      </div>
      <div className="ml-auto flex h-full items-center gap-2">
        <button aria-label="Show hidden icons"><Chevron className="size-3 rotate-180" /></button>
        <svg viewBox="0 0 16 16" fill="none" stroke="#fff" className="size-4">
          <rect x="2.500" y="4.500" width="8" height="7" rx="1.500" />
          <path d="M10.500 7l3-2v6l-3-2M4 2c2-2 5-2 7 0M4 14c2 2 5 2 7 0" />
        </svg>
        <svg viewBox="0 0 17 14" fill="none" stroke="#fff" className="h-[14px] w-[17px]">
          <path d="M.5 5h3l4-4v12l-4-4h-3zM9.500 5c1 1 1 3 0 4M12 3c2 2 2 6 0 8M14 1c3 3 3 9 0 12" />
        </svg>
        <svg viewBox="0 0 16 14" fill="none" stroke="#fff" className="h-[14px] w-4">
          <path d="M5 2.500h10.500v8H3V6M.5.500h4v4h-4zM8 10.500v3M4 13.500h8" />
        </svg>
        <div className="w-[58px] text-center text-xs leading-[18px] whitespace-nowrap">
          2:06 PM
          <br />
          5/15/2026
        </div>
        <button aria-label="Notifications" className="ml-2">
          <svg viewBox="0 0 16 16" fill="none" stroke="#fff" strokeWidth="1.200" className="size-4">
            <path d="M.5 1.500h15v11h-5L8 15l-2.500-2.500h-5z" />
          </svg>
        </button>
        <div className="ml-3 h-full w-1 border-l border-[#555]" />
      </div>
    </footer>
  );
}

function Watermark() {
  return (
    <div className="pointer-events-none absolute right-[50px] bottom-[48px] flex items-center gap-2 font-['Roboto',sans-serif] text-[32px] leading-none font-light text-white/80 drop-shadow-[0_0_2px_rgba(80,80,80,0.8)]">
      <span>ANY</span>
      <svg viewBox="0 0 56 62" fill="none" stroke="currentColor" strokeWidth="2" strokeLinejoin="round" className="h-[62px] w-14">
        <path d="M12 46V3c0-2 2-2 4-1l37 29c2 1 2 2 0 3L16 60c-2 1-4 0-4-2v-6l28-19-22-16v27z" />
        <path d="M2 12l5-3v46l-5-3z" />
      </svg>
      <span>RUN</span>
    </div>
  );
}

export default function App() {
  return (
    <div className="relative flex h-screen flex-col overflow-hidden font-['Open_Sans','Noto_Sans','DejaVu_Sans',sans-serif]">
      <Browser />
      <ArchiveWindow />
      <ExplorerWindow />
      <Taskbar />
      <Watermark />
    </div>
  );
}
